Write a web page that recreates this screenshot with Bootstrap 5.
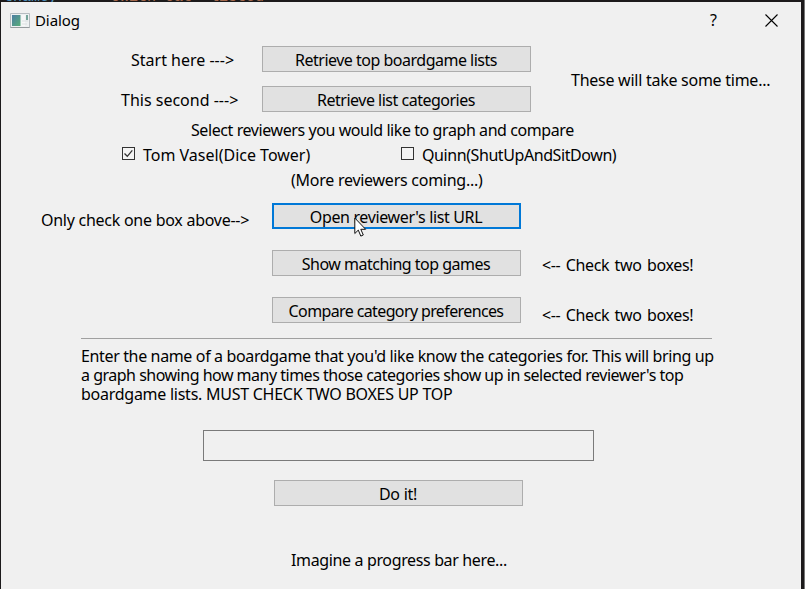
<!DOCTYPE html>
<html lang="en">
<head>
<meta charset="utf-8">
<meta name="viewport" content="width=device-width, initial-scale=1">
<title>Dialog</title>
<link href="https://cdn.jsdelivr.net/npm/bootstrap@5.3.0/dist/css/bootstrap.min.css" rel="stylesheet">
<style>
body{margin:0;width:805px;height:589px;overflow:hidden;background:#1c1a1b;font:16px/20px "Noto Sans","Open Sans",sans-serif;color:#000}
.desk-strip{height:2px;padding-left:3px;gap:44px;overflow:hidden;font:15px/15px "Liberation Mono",monospace;white-space:pre}
.desk-strip span{margin-top:-10px}
.code-a{color:#4f8fb8}.code-b{color:#a3684c}
.desk-edge{border-right:1px solid #777;padding:0 3px 0 1px}
.dialog-win{width:800px;height:587px;background:#f0f0f0;white-space:nowrap}
.title-bar{height:36px;padding:0 23px 0 9px}
.title-text{font-size:15px;margin-left:5px;letter-spacing:-.08px}
.win-btns{gap:46px}
.help-mark{font-size:16px;width:9px}
.btn-win{--bs-btn-color:#000;--bs-btn-bg:#e1e1e1;--bs-btn-border-color:#adadad;--bs-btn-hover-bg:#e1e1e1;--bs-btn-hover-color:#000;--bs-btn-border-radius:0;--bs-btn-padding-y:0;--bs-btn-padding-x:0;--bs-btn-font-size:16px;--bs-btn-line-height:20px;height:26px;padding:2px 1px 0 0;width:249px}
.btn-wide{width:269px}
.btn-focus{--bs-btn-hover-border-color:#0078d7;border:2px solid #0078d7;padding-top:1px}
.fetch-area{margin-top:8px;height:66px}
.label-col{width:261px}
.label-col>div{height:26px;padding-top:4px}
.pair-gap{gap:14px}
.lbl-start{padding-left:130px}.lbl-second{padding-left:120px}
.note-time{margin:1px 0 0 40px}
.select-text{margin:8px 0 0 190px;height:20px}
.checks{height:25px;padding-left:121px;margin-top:2px}
.check-item{gap:8px}
.check-first{width:279px}
.check-box{width:13px;height:13px;border:1px solid #333;margin-top:-3px;background:#f4f4f4}
.more-text{margin-left:290px;height:25px;line-height:25px;margin-top:1px}
.action-row{height:47px}
.action-list{margin-top:10px}
.side-left{width:271px;padding:7px 0 0 40px}
.side-right{margin-left:21px;padding-top:5px;letter-spacing:-.36px;word-spacing:1.6px}
.side-lower{padding-top:8px}
.rule-line{width:631px;height:1px;background:#a0a0a0;margin:-6px 0 0 80px}
.para{margin:8px 0 0 80px;line-height:19px}
.name-box{width:391px;height:31px;margin:26px 0 0 202px;border:1px solid #7a7a7a;border-radius:0;background:#f0f0f0}
.go-btn{margin:19px 0 0 273px}
.progress-text{margin:44px 0 0 290px}
.ls-2{letter-spacing:-.26px}.ls-3{letter-spacing:-.36px}.ls-4{letter-spacing:-.42px}.ls-5{letter-spacing:-.5px}.ls-6{letter-spacing:-.62px}
.pointer{position:absolute;left:354px;top:217px}
</style>
</head>
<body>
<div class="desk-edge">
<div class="desk-strip d-flex"><span class="code-a">tname,</span><span class="code-b">"Owitn Cat" listed</span></div>
<main class="dialog-win">
  <header class="title-bar d-flex align-items-center justify-content-between">
    <div class="d-flex align-items-center">
      <svg width="20" height="17" viewBox="0 0 20 17"><path d="M.5 1.5h19v14H.5z" fill="#eef1f2" stroke="#b7bdc1"/><path d="M.5 15.5h19" stroke="#959b9e"/><path d="M2 3h8.500v11H2z" fill="url(#g)"/><path d="M11.500 3H15v11h-3.500z" fill="#f7f8f8"/><path d="M16 3h2v5h-2z" fill="#77a69b"/><path d="M12 9h6M12 12h5" stroke="#d9dfe0"/><defs><linearGradient id="g" x2="1" y2="1"><stop stop-color="#4c7da2"/><stop offset="1" stop-color="#58ae79"/></linearGradient></defs></svg>
      <span class="title-text">Dialog</span>
    </div>
    <div class="win-btns d-flex align-items-center">
      <span class="help-mark">?</span>
      <svg width="13" height="13" viewBox="0 0 13 13"><path d="M.5.5l12 12M12.500.5l-12 12" stroke="#000" stroke-width="1.100"/></svg>
    </div>
  </header>

  <section class="fetch-area d-flex align-items-center">
    <div class="label-col d-flex flex-column pair-gap">
      <div class="lbl-start">Start here ---&gt;</div>
      <div class="lbl-second">This second ---&gt;</div>
    </div>
    <div class="d-flex flex-column pair-gap">
      <button class="btn btn-win btn-wide ls-5">Retrieve top boardgame lists</button>
      <button class="btn btn-win btn-wide ls-5">Retrieve list categories</button>
    </div>
    <div class="note-time ls-2">These will take some time...</div>
  </section>

  <div class="select-text ls-4">Select reviewers you would like to graph and compare</div>
  <div class="checks d-flex align-items-center">
    <div class="check-item check-first d-flex align-items-center"><span class="check-box d-flex"><svg width="11" height="11" viewBox="0 0 11 11"><path d="M1.500 5.500l2.800 2.800 5-6" fill="none" stroke="#333" stroke-width="1.300"/></svg></span><span>Tom Vasel(Dice Tower)</span></div>
    <div class="check-item d-flex align-items-center"><span class="check-box"></span><span class="ls-4">Quinn(ShutUpAndSitDown)</span></div>
  </div>
  <div class="more-text ls-2">(More reviewers coming...)</div>

  <section class="action-list">
    <div class="action-row d-flex align-items-start"><div class="side-left ls-2">Only check one box above--&gt;</div><button class="btn btn-win btn-focus ls-3">Open reviewer's list URL</button></div>
    <div class="action-row d-flex align-items-start"><div class="side-left"></div><button class="btn btn-win ls-5">Show matching top games</button><div class="side-right">&lt;-- Check two boxes!</div></div>
    <div class="action-row d-flex align-items-start"><div class="side-left"></div><button class="btn btn-win ls-6">Compare category preferences</button><div class="side-right side-lower">&lt;-- Check two boxes!</div></div>
  </section>
  <div class="rule-line"></div>
  <p class="para mb-0"><span class="ls-3">Enter the name of a boardgame that you'd like know the categories for. This will bring up</span><br><span class="ls-5">a graph showing how many times those categories show up in selected reviewer's top</span><br><span class="ls-2">boardgame lists. MUST CHECK TWO BOXES UP TOP</span></p>
  <input class="form-control name-box" type="text" aria-label="Boardgame name">
  <button class="btn btn-win go-btn d-block ls-2">Do it!</button>
  <div class="progress-text ls-3">Imagine a progress bar here...</div>
</main>
</div>
<svg class="pointer" width="13" height="21" viewBox="0 0 13 21"><path d="M.8 1v15.500l3.500-3.400 2.500 6 2.500-1.100-2.500-5.700h4.800z" fill="#fff" stroke="#111"/></svg>
<script src="https://cdn.jsdelivr.net/npm/bootstrap@5.3.0/dist/js/bootstrap.bundle.min.js"></script>
</body>
</html>
